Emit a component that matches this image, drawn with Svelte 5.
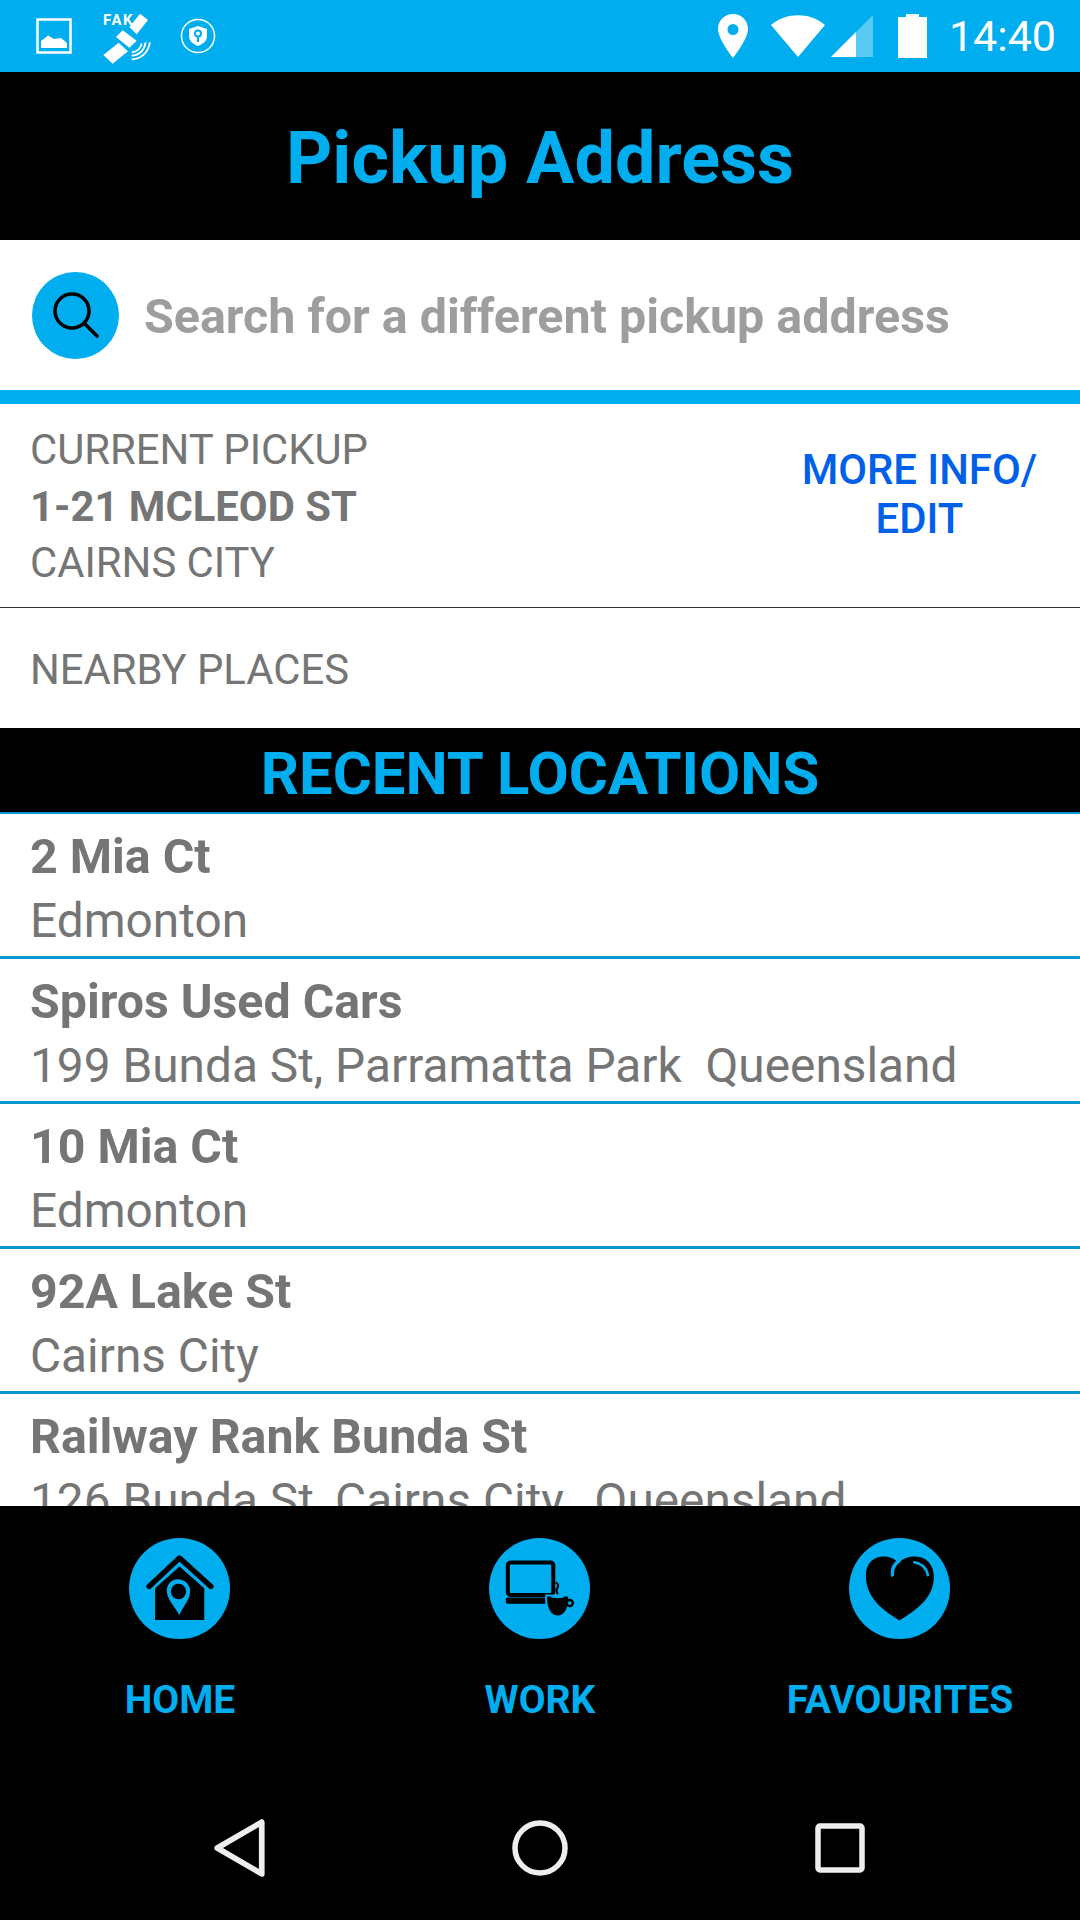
<script>
  const rows = [
    ['2 Mia Ct', 'Edmonton'],
    ['Spiros Used Cars', '199 Bunda St, Parramatta Park  Queensland'],
    ['10 Mia Ct', 'Edmonton'],
    ['92A Lake St', 'Cairns City'],
    ['Railway Rank Bunda St', '126 Bunda St, Cairns City,  Queensland']
  ];
</script>

<div class="screen">
  <div class="status">
    <div class="st-left">
      <svg class="i-pic" viewBox="0 0 36 36"><rect x="1.500" y="1.500" width="33" height="33" fill="none" stroke="#fff" stroke-width="2.500"/><path d="M5 30V23L12 17.500L18 21L25 20L31 25V30Z" fill="#fff"/></svg>
      <div class="fake">
        <span class="fake-t">FAK</span>
        <svg viewBox="0 0 210 195"><g fill="#fff"><path d="M150 26L174 45L140 88L118 66Z"/><path d="M98 76L140 107L118 128L78 96Z"/><path d="M86 113L114 139L68 176L40 150Z"/></g><g fill="none" stroke="#fff" stroke-width="5.500"><path d="M125 142Q150 140 155 115"/><path d="M125 152Q160 150 167 112"/><path d="M125 163Q170 160 180 112"/></g></svg>
      </div>
      <svg class="i-shield" viewBox="0 0 36 36"><circle cx="18" cy="18" r="16.500" fill="none" stroke="#fff" stroke-width="1.500"/><path d="M18 8L27 11V18C27 23 23 26 18 28C13 26 9 23 9 18V11Z" fill="#fff"/><circle cx="18" cy="15.500" r="3" fill="none" stroke="#00aeef" stroke-width="2"/><path d="M18 18V24" stroke="#00aeef" stroke-width="2"/></svg>
    </div>
    <div class="st-right">
      <svg class="i-loc" viewBox="0 0 30 44"><path fill-rule="evenodd" d="M15 0C6 0 0 7 0 15C0 25 15 44 15 44C15 44 30 25 30 15C30 7 24 0 15 0ZM15 10A5.500 5.500 0 1 1 15 21A5.500 5.500 0 1 1 15 10Z" fill="#fff"/></svg>
      <svg class="i-wifi" viewBox="0 0 54 42"><path d="M0 10C15 -3 39 -3 54 10L27 42Z" fill="#fff"/></svg>
      <svg class="i-sig" viewBox="0 0 42 42"><path d="M0 42L42 0V42Z" fill="#fff" fill-opacity=".35"/><path d="M0 42L25 17V42Z" fill="#fff"/></svg>
      <svg class="i-bat" viewBox="0 0 29 44"><path d="M8 0H21V3H29V44H0V3H8Z" fill="#fff"/></svg>
      <span class="time">14:40</span>
    </div>
  </div>

  <header class="title">Pickup Address</header>

  <div class="search">
    <div class="search-btn">
      <svg viewBox="0 0 48 48"><circle cx="20" cy="20" r="17" fill="none" stroke="#000" stroke-width="3.500"/><path d="M32 32L45 45" stroke="#000" stroke-width="3.500" stroke-linecap="round"/></svg>
    </div>
    <span class="search-text">Search for a different pickup address</span>
  </div>

  <div class="current">
    <div class="cur-left">
      <div>CURRENT PICKUP</div>
      <div class="b">1-21 MCLEOD ST</div>
      <div>CAIRNS CITY</div>
    </div>
    <div class="more">MORE INFO/<br />EDIT</div>
  </div>

  <div class="nearby">NEARBY PLACES</div>

  <div class="recent">RECENT LOCATIONS</div>

  <div class="list">
    {#each rows as r}
      <div class="row">
        <div class="r1">{r[0]}</div>
        <div class="r2">{r[1]}</div>
      </div>
    {/each}
  </div>

  <nav class="shortcuts">
    <div class="sc">
      <div class="disc">
        <svg viewBox="87 55 302 302"><path d="M147 200L238 115L332 200" fill="none" stroke="#000" stroke-width="16" stroke-linecap="round" stroke-linejoin="round"/><path fill-rule="evenodd" d="M238 140L312 205V300H165V205ZM233 178C213 178 200 195 200 212C200 238 225 262 237 285C249 262 270 238 270 212C270 195 253 178 233 178ZM235 192A20 20 0 1 1 235 238A20 20 0 1 1 235 192Z" fill="#000"/></svg>
      </div>
      <span>HOME</span>
    </div>
    <div class="sc">
      <div class="disc">
        <svg viewBox="28 25 300 300"><rect x="84" y="98" width="135" height="96" rx="8" fill="none" stroke="#000" stroke-width="12"/><rect x="78" y="202" width="120" height="18" rx="5" fill="#000"/><path d="M198 196H266C269 235 252 258 232 258C212 258 195 235 198 196Z" fill="#000" stroke="#00aeef" stroke-width="6"/><circle cx="268" cy="218" r="9" fill="none" stroke="#000" stroke-width="7"/><ellipse cx="232" cy="200" rx="20" ry="4" fill="#00aeef"/><path d="M232 190C218 176 245 170 228 158" fill="none" stroke="#000" stroke-width="6" stroke-linecap="round"/></svg>
      </div>
      <span>WORK</span>
    </div>
    <div class="sc">
      <div class="disc">
        <svg viewBox="28 25 300 300"><path d="M178 270C130 240 78 205 78 135C78 100 102 80 130 80C150 80 165 88 175 98C190 85 205 80 225 80C258 80 280 105 280 140C280 205 225 240 178 270Z" fill="#000"/><path d="M157 135C155 115 165 100 178 92" fill="none" stroke="#00aeef" stroke-width="10" stroke-linecap="round"/><path d="M222 97C240 100 258 112 262 135" fill="none" stroke="#00aeef" stroke-width="8" stroke-linecap="round"/></svg>
      </div>
      <span>FAVOURITES</span>
    </div>
  </nav>

  <div class="sysnav">
    <svg class="n-back" viewBox="0 0 50 56"><path d="M3 28L46 3V53Z" fill="none" stroke="#eee" stroke-width="5.500" stroke-linejoin="round"/></svg>
    <svg class="n-home" viewBox="0 0 56 56"><circle cx="28" cy="28" r="25" fill="none" stroke="#eee" stroke-width="5.500"/></svg>
    <svg class="n-rec" viewBox="0 0 50 50"><rect x="3" y="3" width="44" height="44" rx="2" fill="none" stroke="#eee" stroke-width="5.500"/></svg>
  </div>
</div>

<style>
  :global(body) { margin: 0; background: #000; }
  .screen {
    width: 1080px; height: 1920px; display: flex; flex-direction: column;
    font-family: Roboto, sans-serif; overflow: hidden; background: #fff;
  }
  .status {
    height: 72px; flex: none; background: #00aeef; display: flex;
    justify-content: space-between; align-items: center; padding: 0 24px 0 36px; box-sizing: border-box;
  }
  .st-left, .st-right { display: flex; align-items: center; }
  .i-pic { width: 36px; height: 36px; }
  .fake { position: relative; width: 70px; height: 65px; margin-left: 18px; margin-top: 3px; }
  .fake svg { width: 70px; height: 65px; display: block; }
  .fake-t { position: absolute; left: 13px; top: 6px; font-size: 15px; font-weight: 700; color: #fff; line-height: 18px; letter-spacing: 1.500px; }
  .i-shield { width: 36px; height: 36px; margin-left: 20px; }
  .i-loc { width: 30px; height: 44px; }
  .i-wifi { width: 54px; height: 42px; margin-left: 23px; }
  .i-sig { width: 42px; height: 42px; margin-left: 6px; }
  .i-bat { width: 29px; height: 44px; margin-left: 25px; }
  .time { color: #fff; font-size: 43px; margin-left: 22px; line-height: 44px; }
  .title {
    height: 168px; flex: none; background: #000; color: #00aeef; font-size: 72px; font-weight: 700;
    display: flex; align-items: center; justify-content: center; padding-top: 4px; box-sizing: border-box;
  }
  .search {
    height: 150px; flex: none; display: flex; align-items: center; padding: 0 32px; box-sizing: border-box; gap: 25px;
  }
  .search-btn {
    width: 87px; height: 87px; border-radius: 50%; background: #00aeef; display: flex; align-items: center; justify-content: center;
  }
  .search-btn svg { width: 48px; height: 48px; }
  .search-text { color: #9e9e9e; font-size: 48.400px; font-weight: 700; padding-top: 2px; }
  .current {
    flex: none; height: 218px; box-sizing: border-box; border-top: 14px solid #00aeef; border-bottom: 1.500px solid #333;
    display: flex; justify-content: space-between; align-items: center; padding: 3px 43px 0 30px;
    color: #757575; font-size: 41.800px; line-height: 56.500px;
  }
  .b { font-weight: 700; }
  .more { color: #0060e8; font-weight: 500; text-align: center; line-height: 49px; margin-top: -27px; }
  .nearby {
    flex: none; height: 120px; display: flex; align-items: center; padding: 2px 30px 0; box-sizing: border-box; color: #757575; font-size: 41.800px;
  }
  .recent {
    flex: none; height: 86px; box-sizing: border-box; background: #000; color: #00aeef; border-bottom: 2px solid #0a96cf;
    font-size: 59.800px; font-weight: 700; display: flex; align-items: center; justify-content: center; padding-top: 8px;
  }
  .list { flex: 1; min-height: 0; overflow: hidden; }
  .row { height: 145px; box-sizing: border-box; border-bottom: 3px solid #0a96cf; padding: 13px 30px 0; }
  .r1 { font-size: 48.300px; font-weight: 700; color: #757575; line-height: 60px; }
  .r2 { font-size: 47.800px; color: #757575; line-height: 68px; white-space: pre; }
  .shortcuts {
    flex: none; height: 254px; background: #000; display: flex; padding-top: 32px; box-sizing: border-box;
  }
  .sc { flex: 1; display: flex; flex-direction: column; align-items: center; color: #00aeef; font-size: 39px; font-weight: 700; }
  .sc span { margin-top: 37px; line-height: 48px; }
  .disc { width: 101px; height: 101px; border-radius: 50%; background: #00aeef; margin-right: 2px; }
  .disc svg { width: 101px; height: 101px; display: block; }
  .sysnav {
    flex: none; height: 160px; background: #000; display: grid; grid-template-columns: repeat(3, 300px);
    padding: 16px 90px 0; box-sizing: border-box; justify-items: center; align-items: center;
  }
  .n-back { width: 52px; height: 58px; }
  .n-home { width: 56px; height: 56px; }
  .n-rec { width: 50px; height: 50px; }
</style>
